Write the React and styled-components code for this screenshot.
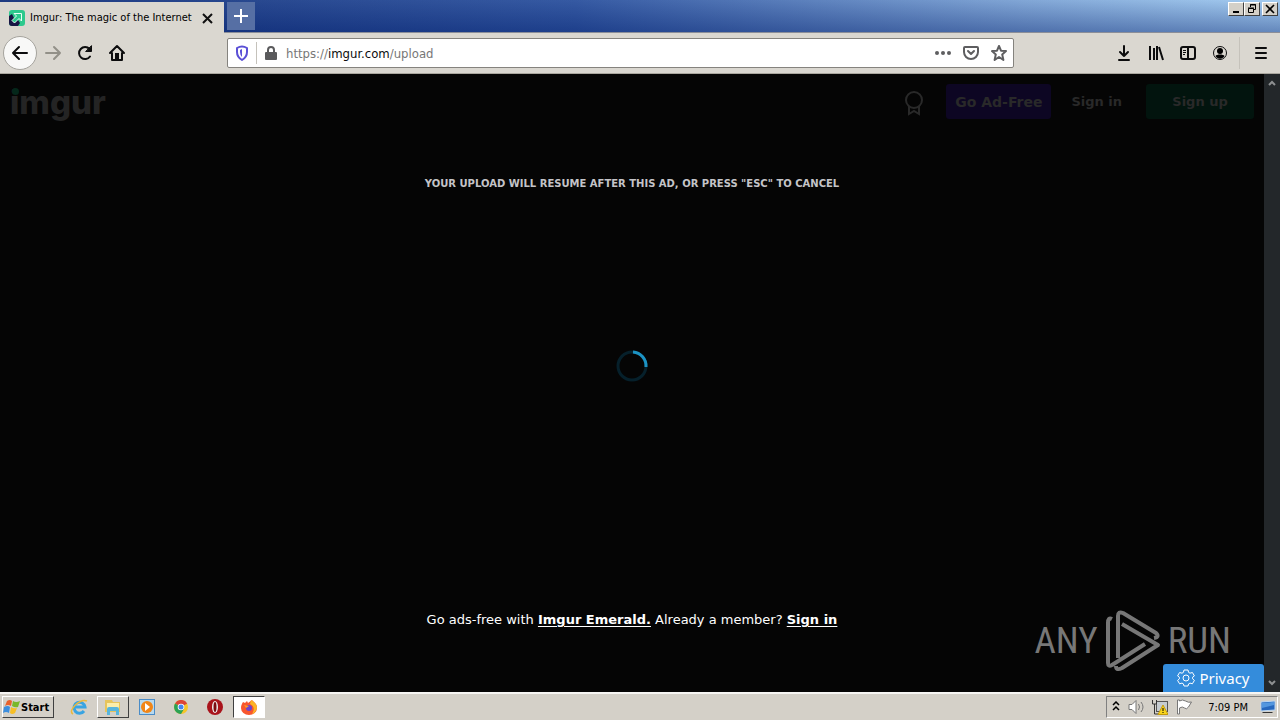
import React from "react";
import styled, { createGlobalStyle, keyframes } from "styled-components";

const GlobalStyle = createGlobalStyle`
  * {
    box-sizing: border-box;
  }
  body {
    margin: 0;
    background: #050505;
    font-family: "DejaVu Sans Condensed", "DejaVu Sans", sans-serif;
    font-size: 11px;
    color: #000;
  }
  button {
    font: inherit;
    color: inherit;
    padding: 0;
    border: 0;
    background: none;
  }
  svg {
    display: block;
    flex: none;
  }
`;

function TitleBar() {
  return (
    <Title>
      <Tab>
        <Favicon />
        <span>Imgur: The magic of the Internet</span>
        <IconButton aria-label="Close tab">
          <svg width="12" height="12" viewBox="0 0 12 12" stroke="#111" strokeWidth="2">
            <path d="M2 2l9 9M11 2l-9 9" />
          </svg>
        </IconButton>
      </Tab>
      <NewTab aria-label="New tab">
        <svg width="16" height="16" viewBox="0 0 16 16" stroke="#fff" strokeWidth="2">
          <path d="M8 1v14M1 8h14" />
        </svg>
      </NewTab>
      <WindowButtons>
        <WindowButton aria-label="Minimize">
          <svg width="10" height="10" viewBox="0 0 10 10">
            <path d="M2 7h6v2H2z" />
          </svg>
        </WindowButton>
        <WindowButton aria-label="Restore">
          <svg width="10" height="10" viewBox="0 0 10 10" fill="none" stroke="#000">
            <path d="M3.5 3V.5h5v5H7M3 1h6M1.5 4.5h5v4h-5zM1 4h6" />
          </svg>
        </WindowButton>
        <WindowButton aria-label="Close" $gap>
          <svg width="10" height="10" viewBox="0 0 10 10" stroke="#000" strokeWidth="1.6">
            <path d="M1 1l8 8M9 1L1 9" />
          </svg>
        </WindowButton>
      </WindowButtons>
    </Title>
  );
}

function Favicon() {
  return (
    <svg width="16" height="16" viewBox="0 0 16 16">
      <rect width="16" height="16" rx="3" fill="#2cc98d" />
      <path d="M0 6v7a3 3 0 0 0 3 3h6l2-3-2-3-4-2-2-4z" fill="#171544" />
      <path d="M5 3.500h7.500V11L10 8.500 5.500 13 3 10.500 7.500 6z" fill="#2cc98d" stroke="#e8fff6" />
    </svg>
  );
}

function ToolBar() {
  return (
    <Tools>
      <BackButton aria-label="Back">
        <svg width="18" height="18" viewBox="0 0 18 18" fill="none" stroke="#0c0c0d" strokeWidth="2" strokeLinecap="round" strokeLinejoin="round">
          <path d="M2 9h14M8 3L2 9l6 6" />
        </svg>
      </BackButton>
      <NavButton aria-label="Forward">
        <svg width="18" height="18" viewBox="0 0 18 18" fill="none" stroke="#929088" strokeWidth="2" strokeLinecap="round" strokeLinejoin="round">
          <path d="M2 9h14M10 3l6 6-6 6" />
        </svg>
      </NavButton>
      <NavButton aria-label="Reload">
        <svg width="18" height="18" viewBox="0 0 18 18" fill="none" stroke="#0c0c0d" strokeWidth="2" strokeLinecap="round">
          <path d="M14 12.500a6 6 0 1 1-.5-7.500" />
          <path d="M15.500 2v5.500H10z" fill="#0c0c0d" strokeWidth="1" strokeLinejoin="round" />
        </svg>
      </NavButton>
      <NavButton aria-label="Home">
        <svg width="18" height="18" viewBox="0 0 18 18" fill="none" stroke="#0c0c0d" strokeWidth="2" strokeLinecap="round" strokeLinejoin="round">
          <path d="M2 9l7-7 7 7M4 9v7h10V9" />
          <path d="M9 9v6" strokeWidth="4" strokeLinecap="butt" />
        </svg>
      </NavButton>
      <AddressBar>
        <svg width="12" height="16" viewBox="0 0 12 16" fill="none" stroke="#5b50d6" strokeWidth="2" strokeLinejoin="round">
          <path d="M1 3q5-3 10 0v4q0 5-5 8-5-3-5-8z" />
          <path d="M6 4v8q-2-2-2-5V5z" fill="#5b50d6" stroke="none" />
        </svg>
        <Separator />
        <svg width="12" height="14" viewBox="0 0 12 14">
          <rect y="6" width="12" height="8" rx="1" fill="#5a5a5c" />
          <path d="M3 7V4a3 3 0 0 1 6 0v3" fill="none" stroke="#5a5a5c" strokeWidth="2" />
        </svg>
        <Url href="https://imgur.com/upload">
          https://<b>imgur.com</b>/upload
        </Url>
        <NavButton aria-label="Page actions" $small>
          <svg width="16" height="16" viewBox="0 0 16 16" fill="#5e5e60">
            <circle cx="2" cy="8" r="2" />
            <circle cx="8" cy="8" r="2" />
            <circle cx="14" cy="8" r="2" />
          </svg>
        </NavButton>
        <NavButton aria-label="Save to Pocket" $small>
          <svg width="16" height="16" viewBox="0 0 16 16" fill="none" stroke="#5e5e60" strokeWidth="2" strokeLinecap="round" strokeLinejoin="round">
            <path d="M2 2h12a1 1 0 0 1 1 1v4a7 7 0 0 1-14 0V3a1 1 0 0 1 1-1zM5 6l3 3 3-3" />
          </svg>
        </NavButton>
        <NavButton aria-label="Bookmark" $small>
          <svg width="16" height="16" viewBox="0 0 16 16" fill="none" stroke="#5e5e60" strokeWidth="2" strokeLinejoin="round">
            <path d="M8 1l2 4.700 5 .4-3.800 3.300L12.400 15 8 12l-4.400 3 1.200-5.600L1 6.100l5-.4z" />
          </svg>
        </NavButton>
      </AddressBar>
      <RightTools>
        <NavButton aria-label="Downloads">
          <svg width="16" height="18" viewBox="0 0 16 18" fill="none" stroke="#0c0c0d" strokeWidth="2" strokeLinecap="round" strokeLinejoin="round">
            <path d="M8 2v10M4 8l4 4 4-4M3 16h10" />
          </svg>
        </NavButton>
        <NavButton aria-label="Library">
          <svg width="16" height="16" viewBox="0 0 16 16" fill="none" stroke="#0c0c0d" strokeWidth="2">
            <path d="M2 1v14M6 3v12M9 1v14M11 2l4 13" />
          </svg>
        </NavButton>
        <NavButton aria-label="Sidebars">
          <svg width="16" height="16" viewBox="0 0 16 16" fill="none" stroke="#0c0c0d" strokeWidth="2">
            <rect x="1" y="2" width="14" height="12" rx="2" />
            <path d="M8 2v12" />
            <path d="M3 5.500h3M3 7.500h3M3 9.500h2" strokeWidth="1" />
          </svg>
        </NavButton>
        <NavButton aria-label="Account">
          <svg width="16" height="16" viewBox="0 0 16 16">
            <circle cx="8" cy="8" r="6.500" fill="none" stroke="#0c0c0d" />
            <circle cx="8" cy="6" r="3" />
            <path d="M3.500 11c1-2 8-2 9 0-2 3.500-7 3.500-9 0z" />
          </svg>
        </NavButton>
        <Separator $tall />
        <NavButton aria-label="Menu">
          <svg width="14" height="14" viewBox="0 0 14 14" stroke="#0c0c0d" strokeWidth="2" strokeLinecap="round">
            <path d="M2 2h10M2 7h10M2 12h10" />
          </svg>
        </NavButton>
      </RightTools>
    </Tools>
  );
}

function Spinner() {
  return (
    <Spin width="32" height="32" viewBox="0 0 32 32" fill="none" strokeWidth="3">
      <circle cx="16" cy="16" r="14" stroke="#06202b" />
      <path d="M17 2a14 14 0 0 1 13 15" stroke="#1c93c4" />
    </Spin>
  );
}

function AnyRun() {
  return (
    <Watermark>
      <span>ANY</span>
      <svg width="56" height="64" viewBox="0 0 56 64" fill="none" stroke="#777" strokeWidth="4" strokeLinejoin="round">
        <path d="M7 10q-4-2-4 4v40q0 4 4 2l33-21" />
        <path d="M13 49V7q0-5 5-3l33 20q4 4-2 5" />
        <path d="M17 15l36 21-36 23q-6 3-6-2" />
      </svg>
      <span>RUN</span>
    </Watermark>
  );
}

function Page() {
  return (
    <Viewport>
      <Content>
        <SiteHeader>
          <Logo href="#">imgur</Logo>
          <svg width="20" height="28" viewBox="0 -3 20 28" fill="none" stroke="#292929" strokeWidth="2">
            <circle cx="10" cy="9" r="8" />
            <path d="M5 15v8l5-3 5 3v-8" />
          </svg>
          <HeaderButton $bg="#0d0623">Go Ad-Free</HeaderButton>
          <SignIn href="#">Sign in</SignIn>
          <HeaderButton $bg="#02140e" $wide>Sign up</HeaderButton>
        </SiteHeader>
        <Notice>Your upload will resume after this ad, or press "ESC" to cancel</Notice>
        <Loading>
          <Spinner />
        </Loading>
        <Upsell>
          Go ads-free with <a href="#">Imgur Emerald.</a> Already a member? <a href="#">Sign in</a>
        </Upsell>
        <AnyRun />
        <Privacy>
          <svg width="18" height="18" viewBox="0 0 18 18" fill="none" stroke="#fff" strokeLinejoin="round">
            <path d="M7 1h4l.6 2.400 1.400.8 2.400-.7 2 3.400L15.600 8.200v1.600l1.800 1.600-2 3.400-2.400-.7-1.400.8L11 17H7l-.6-2.100-1.400-.8-2.400.7-2-3.400 1.800-1.600V8.200L.6 6.900l2-3.400 2.400.7 1.400-.8z" />
            <circle cx="9" cy="9" r="3" />
          </svg>
          Privacy
        </Privacy>
      </Content>
      <Scrollbar>
        <svg width="8" height="6" viewBox="0 0 8 6" fill="none" stroke="#8d8f91" strokeWidth="2">
          <path d="M1 5l3-3 3 3" />
        </svg>
        <svg width="8" height="6" viewBox="0 0 8 6" fill="none" stroke="#8d8f91" strokeWidth="2">
          <path d="M1 1l3 3 3-3" />
        </svg>
      </Scrollbar>
    </Viewport>
  );
}

function TaskBar() {
  return (
    <Tasks>
      <StartButton>
        <svg width="18" height="16" viewBox="0 0 18 16">
          <path d="M4 2q3-2 5 0L8 7Q5 5 2 7z" fill="#e8612c" />
          <path d="M10 2q3 2 7 0l-2 6q-3 1-6-1z" fill="#79b829" />
          <path d="M1 8q4-2 6 0l-1 6q-3-2-6 0z" fill="#3c8ede" />
          <path d="M8 8q3 2 6 1l-2 5q-3 2-5 0z" fill="#f7bf25" />
        </svg>
        Start
      </StartButton>
      <Task aria-label="Internet Explorer">
        <svg width="18" height="18" viewBox="0 0 18 18" fill="none">
          <path d="M14 13a5.500 5.500 0 1 1 1-4H5" stroke="#39a4e2" strokeWidth="3" />
          <path d="M3 16C-3 13 10 0 17 3" stroke="#ebb93c" strokeWidth="1.500" />
        </svg>
      </Task>
      <Task aria-label="Explorer" $raised>
        <svg width="18" height="18" viewBox="0 0 18 18">
          <path d="M1 2h7l1 2h7v10H1z" fill="#e7c45b" />
          <path d="M3 5h12v7H3z" fill="#fbedaa" />
          <path d="M3 17v-6q0-2 2-2h8q2 0 2 2v6h-3v-4H6v4z" fill="#58b5dc" />
        </svg>
      </Task>
      <Task aria-label="Media Player">
        <svg width="16" height="16" viewBox="0 0 16 16">
          <rect x=".5" y=".5" width="15" height="15" fill="#b7d9ef" stroke="#4a8cc7" />
          <circle cx="8" cy="8" r="6" fill="#f18618" />
          <path d="M6 4l5 4-5 4z" fill="#fff" />
        </svg>
      </Task>
      <Task aria-label="Chrome">
        <svg width="14" height="14" viewBox="0 0 14 14">
          <circle cx="7" cy="7" r="7" fill="#f5c529" />
          <path d="M7 7L1 3.500a7 7 0 0 1 12.200 0z" fill="#dc4437" />
          <path d="M7 7L1 3.500A7 7 0 0 0 7 14l3-5z" fill="#2ba255" />
          <circle cx="7" cy="7" r="3.300" fill="#fff" />
          <circle cx="7" cy="7" r="2.500" fill="#4586ee" />
        </svg>
      </Task>
      <Task aria-label="Opera">
        <svg width="16" height="16" viewBox="0 0 16 16">
          <circle cx="8" cy="8" r="8" fill="#a9131b" />
          <ellipse cx="8" cy="8" rx="3" ry="6" fill="#eee" />
          <ellipse cx="8" cy="8" rx="1.500" ry="5" fill="#7c0b11" />
        </svg>
      </Task>
      <Task aria-label="Firefox" $pressed>
        <svg width="16" height="16" viewBox="0 0 16 16">
          <path d="M2 3l2 1 2-2 1 2 4-3c3 3 5 4 5 8a8 7 0 0 1-16 0c0-3 1-4 2-6z" fill="#f8562e" />
          <path d="M10 1c4 2 6 5 6 8-1 4-3 5-5 6 3-5 2-8-2-10z" fill="#fbb526" />
          <circle cx="8" cy="9" r="3" fill="#6c45cd" />
          <path d="M3 6l5 1-3 2z" fill="#fb9b25" />
        </svg>
      </Task>
      <Tray>
        <svg width="8" height="12" viewBox="0 0 8 12" fill="none" stroke="#000" strokeWidth="1.500">
          <path d="M1 4l3-3 3 3M1 9l3-3 3 3" />
        </svg>
        <svg width="16" height="16" viewBox="0 0 16 16" fill="none" stroke="#777">
          <path d="M1 5.500h3l4-4v13l-4-4H1z" fill="#fff" />
          <path d="M10.500 5q2 3 0 6M13 3q4 5 0 10" />
        </svg>
        <svg width="16" height="16" viewBox="0 0 16 16" fill="none" stroke="#555">
          <rect x="4.500" y="2.500" width="11" height="10" fill="#c6ccd0" />
          <path d="M.5 1v4h4V1M2.500 5v10H6" stroke="#333" />
          <path d="M11 6l5 9.500H6z" fill="#f8d51d" stroke="#c49a0c" />
          <path d="M11 9v3M11 13v1" stroke="#000" />
        </svg>
        <svg width="16" height="16" viewBox="0 0 16 16" fill="#fff" stroke="#777">
          <path d="M1.500 1v14h2V9q3-2 5 0t4-1l3-5q-3 1-6-1t-6 0V1z" />
        </svg>
        <Clock>7:09 PM</Clock>
        <svg width="16" height="14" viewBox="0 0 16 14">
          <path d="M1 2l14-1v9l-14 1z" fill="#2667bd" stroke="#bcd8f4" />
          <path d="M2 3l12-1v3L2 8z" fill="#5397df" />
          <path d="M3 12h9l1 1H2z" fill="#333" />
        </svg>
      </Tray>
    </Tasks>
  );
}

export default function App() {
  return (
    <Desktop>
      <GlobalStyle />
      <TitleBar />
      <ToolBar />
      <Page />
      <TaskBar />
    </Desktop>
  );
}

const Desktop = styled.div`
  display: flex;
  flex-direction: column;
  min-height: 100vh;
`;

const Title = styled.header`
  display: flex;
  height: 33px;
  background:
    linear-gradient(rgba(255, 255, 255, 0.05), rgba(10, 36, 110, 0.4)),
    linear-gradient(90deg, #12307a, #2b519e 45%, #7ba2d4 80%, #a0caf0);
  border-bottom: 1px solid #8b8e98;
`;

const Tab = styled.div`
  display: flex;
  align-items: center;
  gap: 5px;
  width: 224px;
  height: 31px;
  margin-top: 2px;
  padding: 0 9px;
  background: #dad7d0;

  span {
    flex: 1;
    white-space: nowrap;
  }
`;

const IconButton = styled.button`
  display: flex;
  padding: 2px;
`;

const NewTab = styled(IconButton)`
  align-items: center;
  justify-content: center;
  width: 28px;
  height: 28px;
  margin: 2px 0 0 3px;
  background: #566fa4;
`;

const WindowButtons = styled.div`
  display: flex;
  margin: 2px 2px 0 auto;
`;

const WindowButton = styled.button`
  display: flex;
  align-items: center;
  justify-content: center;
  width: 16px;
  height: 14px;
  margin-left: ${(props) => (props.$gap ? "2px" : "0")};
  background: #d4d0c8;
  border: 1px solid;
  border-color: #fff #404040 #404040 #fff;
`;

const Tools = styled.nav`
  display: flex;
  align-items: center;
  height: 41px;
  padding: 0 3px;
  background: #dad7d0;
  border-bottom: 1px solid #aaa79f;
`;

const NavButton = styled.button`
  display: flex;
  align-items: center;
  justify-content: center;
  width: ${(props) => (props.$small ? "28px" : "32px")};
  height: 32px;
`;

const BackButton = styled(NavButton)`
  width: 34px;
  height: 34px;
  background: #f8f8f7;
  border: 1px solid #a5a39d;
  border-radius: 50%;
`;

const AddressBar = styled.div`
  display: flex;
  align-items: center;
  flex: 1;
  height: 30px;
  margin-left: 94px;
  padding-left: 8px;
  background: #fff;
  border: 1px solid #85837e;
  border-radius: 2px;
`;

const Separator = styled.div`
  width: 1px;
  height: ${(props) => (props.$tall ? "32px" : "22px")};
  margin: ${(props) => (props.$tall ? "0 5px 0 3px" : "0 8px")};
  background: #c5c2bb;
`;

const Url = styled.a`
  flex: 1;
  margin-left: 9px;
  font-size: 13px;
  color: #777;
  text-decoration: none;

  b {
    font-weight: normal;
    color: #0c0c0d;
  }
`;

const RightTools = styled.div`
  display: flex;
  align-items: center;
  margin-left: 94px;
`;

const Viewport = styled.div`
  display: flex;
  flex: 1;
`;

const Content = styled.main`
  position: relative;
  display: flex;
  flex-direction: column;
  flex: 1;
  background: #050505;
`;

const SiteHeader = styled.header`
  display: flex;
  align-items: center;
  height: 55px;
  padding: 0 10px;
  font-family: "DejaVu Sans", sans-serif;
  font-size: 14px;
  font-weight: bold;
  color: #292929;
`;

const Logo = styled.a`
  position: relative;
  margin-right: auto;
  font-family: Inter, sans-serif;
  font-size: 33px;
  font-weight: 800;
  line-height: 40px;
  color: #242424;
  text-decoration: none;

  /* green dot of the i */
  &::before {
    content: "";
    position: absolute;
    top: 6px;
    left: 2px;
    width: 7px;
    height: 7px;
    border-radius: 50%;
    background: #04271a;
  }
`;

const HeaderButton = styled.button`
  width: ${(props) => (props.$wide ? "108px" : "105px")};
  height: 35px;
  margin-left: ${(props) => (props.$wide ? "24px" : "22px")};
  font-size: ${(props) => (props.$wide ? "13px" : "14px")};
  background: ${(props) => props.$bg};
  border-radius: 3px;
`;

const SignIn = styled.a`
  margin-left: 20px;
  font-size: 13px;
  color: inherit;
  text-decoration: none;
`;

const Notice = styled.p`
  margin: 49px 0 0;
  font-family: "DejaVu Sans", sans-serif;
  font-size: 10px;
  font-weight: bold;
  line-height: 12px;
  color: #c4c4c8;
  text-align: center;
  text-transform: uppercase;
`;

const Loading = styled.div`
  display: flex;
  align-items: center;
  justify-content: center;
  flex: 1;
  padding-bottom: 68px;
`;

const turn = keyframes`
  to {
    transform: rotate(360deg);
  }
`;

const Spin = styled.svg`
  @media (prefers-reduced-motion: no-preference) {
    animation: ${turn} 1s linear 60s infinite;
  }
`;

const Upsell = styled.p`
  margin: 0 0 62px;
  font-family: "DejaVu Sans", sans-serif;
  font-size: 13px;
  line-height: 20px;
  color: #fff;
  text-align: center;

  a {
    color: inherit;
    font-weight: bold;
    text-underline-offset: 2px;
  }
`;

const Watermark = styled.div`
  position: absolute;
  right: 33px;
  bottom: 19px;
  display: flex;
  align-items: center;
  gap: 7px;
  font-family: "Roboto Condensed", "Liberation Sans Narrow", "DejaVu Sans Condensed", sans-serif;
  font-size: 37px;
  line-height: 64px;
  color: #777;
`;

const Privacy = styled.button`
  position: absolute;
  right: 0;
  bottom: 0;
  display: flex;
  align-items: center;
  justify-content: center;
  gap: 4px;
  width: 101px;
  height: 28px;
  font-family: "Noto Sans", sans-serif;
  font-size: 15px;
  color: #fff;
  background: #348cdb;
  border-radius: 3px 3px 0 0;
`;

const Scrollbar = styled.div`
  display: flex;
  flex-direction: column;
  align-items: center;
  justify-content: space-between;
  width: 16px;
  padding: 6px 0;
  background: #23272a;
`;

const Tasks = styled.footer`
  display: flex;
  align-items: center;
  height: 28px;
  padding: 0 2px;
  background: #d4d0c8;
  border-top: 2px solid #f6f5f3;
`;

const StartButton = styled.button`
  display: flex;
  align-items: center;
  height: 22px;
  width: 52px;
  margin-right: 9px;
  font-weight: bold;
  border: 1px solid;
  border-color: #fff #404040 #404040 #fff;
`;

const Task = styled.button`
  display: flex;
  align-items: center;
  justify-content: center;
  width: 32px;
  height: 22px;
  margin-right: 2px;
  background: ${(props) => (props.$pressed ? "#fff" : "transparent")};
  border: 1px solid;
  border-color: ${(props) =>
    props.$raised ? "#fff #404040 #404040 #fff" : props.$pressed ? "#404040 #fff #fff #404040" : "transparent"};
`;

const Tray = styled.div`
  display: flex;
  align-items: center;
  gap: 8px;
  height: 22px;
  margin-left: auto;
  padding: 0 1px 0 5px;
  border: 1px solid;
  border-color: #808080 #fff #fff #808080;
`;

const Clock = styled.time`
  margin: 0 4px 0 8px;
`;
